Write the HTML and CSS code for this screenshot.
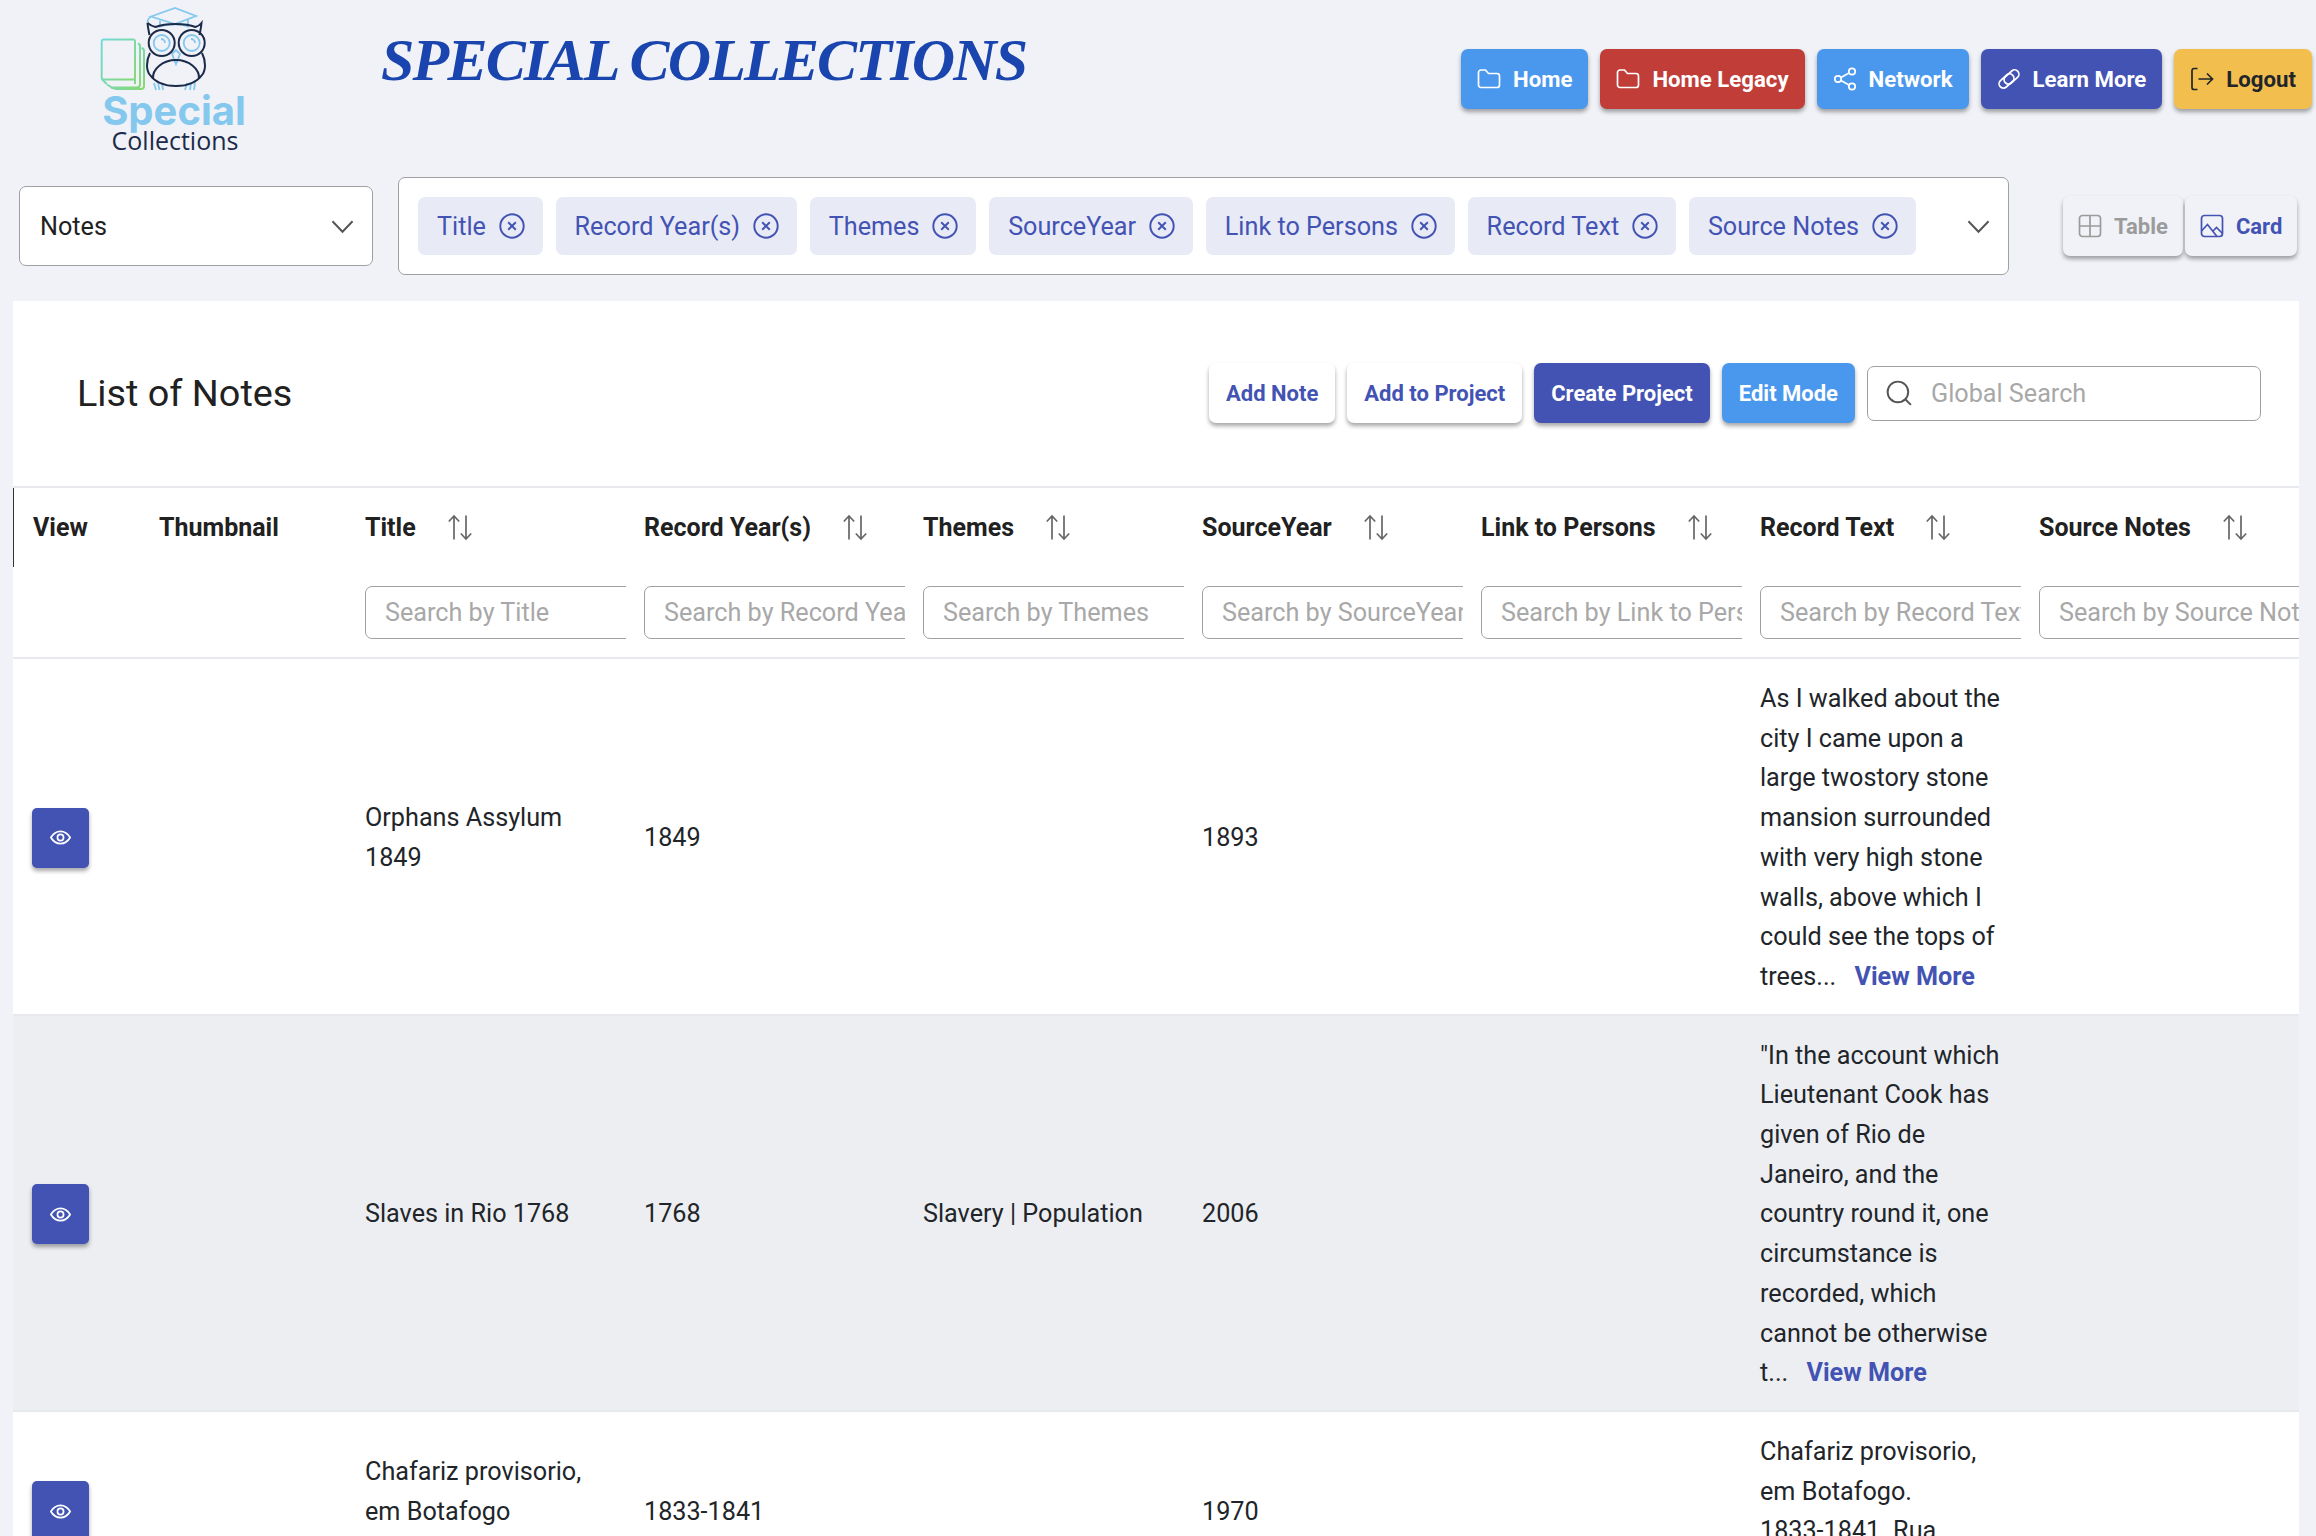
FILE: index.html
```html
<!DOCTYPE html>
<html lang="en">
<head>
   <meta charset="UTF-8">
   <meta name="viewport" content="width=device-width, initial-scale=1.0">
   <title>Special Collections</title>
   <link rel="stylesheet" href="styles.css">
</head>
<body>
   <svg class="icon-defs" width="0" height="0">
       <defs>
           <linearGradient id="bookGrad" x1="0" y1="0" x2="1" y2="1">
               <stop offset="0" stop-color="#74dadb"/>
               <stop offset="1" stop-color="#86d873"/>
           </linearGradient>
           <symbol id="i-folder" viewBox="0 0 24 24"><path d="M1.500 5.500a2.500 2.500 0 0 1 2.500-2.500h4.500l3 3.500h8.500a2.500 2.500 0 0 1 2.500 2.500v9a2.500 2.500 0 0 1-2.500 2.500H4a2.500 2.500 0 0 1-2.500-2.500z"/></symbol>
           <symbol id="i-share" viewBox="0 0 24 24"><circle cx="19" cy="4.500" r="3.200"/><circle cx="19" cy="19.500" r="3.200"/><circle cx="5" cy="12" r="3.200"/><path d="M8 10.400l8-4.300M8 13.600l8 4.300"/></symbol>
           <symbol id="i-link" viewBox="0 0 24 24"><rect x="1" y="9.700" width="17" height="8.600" rx="4.300" transform="rotate(-42 9.500 14)"/><rect x="6" y="5.700" width="17" height="8.600" rx="4.300" transform="rotate(-42 14.500 10)"/></symbol>
           <symbol id="i-logout" viewBox="0 0 24 24"><path d="M7.500 1.500H4a2 2 0 0 0-2 2v17a2 2 0 0 0 2 2h3.500"/><path d="M8.500 12h14M17 6.500l5.500 5.500-5.500 5.500"/></symbol>
           <symbol id="i-table" viewBox="0 0 24 24"><rect x="1.500" y="1.500" width="21" height="21" rx="3"/><path d="M1.500 12h21M12 1.500v21"/></symbol>
           <symbol id="i-image" viewBox="0 0 24 24"><rect x="1.500" y="1.500" width="21" height="21" rx="3"/><path d="M1.500 17l6-6.500 9.500 12M13 17l3.500-3.500 6 6"/></symbol>
           <symbol id="i-search" viewBox="0 0 24 24"><circle cx="11" cy="11" r="9.500"/><path d="M18 18l5 5"/></symbol>
           <symbol id="i-eye" viewBox="0 0 24 24"><path d="M1 12c3-5 6.500-7 11-7s8 2 11 7c-3 5-6.500 7-11 7s-8-2-11-7z"/><circle cx="12" cy="12" r="3.500"/></symbol>
           <symbol id="i-close" viewBox="0 0 24 24"><circle cx="12" cy="12" r="10.800"/><path d="M8.500 8.500l7 7M15.500 8.500l-7 7"/></symbol>
           <symbol id="i-down" viewBox="0 0 24 24"><path d="M1.500 6.500L12 17.500 22.500 6.500"/></symbol>
           <symbol id="i-sort" viewBox="0 0 26 26"><path d="M7 25V1.500M1.800 7L7 1.500 12.200 7M19 1v23.500M13.800 19l5.200 5.500 5.200-5.500"/></symbol>
       </defs>
   </svg>

   <div class="page">
       <header class="top-bar">
           <div class="logo">
               <svg class="logo-art" width="110" height="84" viewBox="0 0 110 84">
                   <g fill="none" stroke="url(#bookGrad)" stroke-width="2">
                       <path d="M38 36.500a3 3 0 0 1 2 3v38a3 3 0 0 1-3 3H12l-5-3"/>
                       <path d="M41.500 41a3 3 0 0 1 2.500 3v35a3 3 0 0 1-3 3H16l-5-1.500"/>
                       <rect x="1.700" y="32.500" width="33.300" height="40" rx="2"/>
                       <path d="M1.700 72l5 5M35 72v5"/>
                   </g>
                   <g fill="none" stroke="#84c8ee" stroke-width="1.800">
                       <path d="M51 9.500L75 1l21 8-21 8z"/>
                       <path d="M60 13.500v6c8-3 22-3 28 0v-7"/>
                       <path d="M51 10c-3 1-4 4-3 7"/>
                       <circle cx="61.700" cy="36" r="8"/>
                       <circle cx="91.700" cy="36" r="8"/>
                       <path d="M61 32a4 4 0 0 1 4 4M91 32a4 4 0 0 1 4 4"/>
                       <path d="M76 43l-4 4 4 10 4-10z"/>
                       <path d="M54 76l2 7M58 76l1.500 7M62 76l1 7M87 76l-2 7M91 76l-1 7M95 76l-1 7"/>
                   </g>
                   <g fill="none" stroke="#1c2b49" stroke-width="2">
                       <path d="M47.500 16c3 2.500 6 3.500 8 4 10-4 30-4 40 0 2-.5 4-1.500 6-4-.500 6-1.500 9-2 12"/>
                       <path d="M47.500 16c.500 6 1.500 9 2 12"/>
                       <circle cx="61.700" cy="36" r="13"/>
                       <circle cx="91.700" cy="36" r="13"/>
                       <path d="M50 46c-4 8-4 17 0 22 5 7 13 11 26 11s21-4 26-11c4-5 4-14 0-22"/>
                       <path d="M53 72c-1-10 10-19 23-19s24 9 23 19"/>
                   </g>
               </svg>
               <span class="logo-main">Special</span>
               <span class="logo-sub">Collections</span>
           </div>
           <h1 class="site-title">SPECIAL COLLECTIONS</h1>
           <nav class="main-nav">
               <a class="btn btn-blue"><svg class="ico"><use href="#i-folder"/></svg>Home</a>
               <a class="btn btn-red"><svg class="ico"><use href="#i-folder"/></svg>Home Legacy</a>
               <a class="btn btn-blue"><svg class="ico"><use href="#i-share"/></svg>Network</a>
               <a class="btn btn-indigo"><svg class="ico"><use href="#i-link"/></svg>Learn More</a>
               <a class="btn btn-yellow"><svg class="ico"><use href="#i-logout"/></svg>Logout</a>
           </nav>
       </header>

       <div class="filter-bar">
           <div class="select-box">
               <span>Notes</span>
               <svg class="ico-down"><use href="#i-down"/></svg>
           </div>
           <div class="multi-box">
               <div class="chips">
                   <span class="chip">Title<svg class="ico-close"><use href="#i-close"/></svg></span>
                   <span class="chip">Record Year(s)<svg class="ico-close"><use href="#i-close"/></svg></span>
                   <span class="chip">Themes<svg class="ico-close"><use href="#i-close"/></svg></span>
                   <span class="chip">SourceYear<svg class="ico-close"><use href="#i-close"/></svg></span>
                   <span class="chip">Link to Persons<svg class="ico-close"><use href="#i-close"/></svg></span>
                   <span class="chip">Record Text<svg class="ico-close"><use href="#i-close"/></svg></span>
                   <span class="chip">Source Notes<svg class="ico-close"><use href="#i-close"/></svg></span>
               </div>
               <svg class="ico-down"><use href="#i-down"/></svg>
           </div>
           <div class="view-toggle">
               <a class="toggle-btn toggle-table"><svg class="ico"><use href="#i-table"/></svg>Table</a>
               <a class="toggle-btn toggle-card"><svg class="ico"><use href="#i-image"/></svg>Card</a>
           </div>
       </div>

       <main class="card">
           <div class="card-head">
               <h2>List of Notes</h2>
               <div class="card-actions">
                   <a class="act act-white">Add Note</a>
                   <a class="act act-white">Add to Project</a>
                   <a class="act btn-indigo">Create Project</a>
                   <a class="act btn-blue">Edit Mode</a>
                   <div class="global-search">
                       <svg class="ico-search"><use href="#i-search"/></svg>
                       <input type="text" placeholder="Global Search">
                   </div>
               </div>
           </div>

           <table class="notes-table">
               <colgroup>
                   <col class="col-view"><col class="col-thumb">
                   <col class="col-data"><col class="col-data"><col class="col-data"><col class="col-data"><col class="col-data"><col class="col-data"><col class="col-data">
               </colgroup>
               <thead>
                   <tr class="head-row">
                       <th class="first-head">View</th>
                       <th>Thumbnail</th>
                       <th><div class="th-in">Title<svg class="ico-sort"><use href="#i-sort"/></svg></div></th>
                       <th><div class="th-in">Record Year(s)<svg class="ico-sort"><use href="#i-sort"/></svg></div></th>
                       <th><div class="th-in">Themes<svg class="ico-sort"><use href="#i-sort"/></svg></div></th>
                       <th><div class="th-in">SourceYear<svg class="ico-sort"><use href="#i-sort"/></svg></div></th>
                       <th><div class="th-in">Link to Persons<svg class="ico-sort"><use href="#i-sort"/></svg></div></th>
                       <th><div class="th-in">Record Text<svg class="ico-sort"><use href="#i-sort"/></svg></div></th>
                       <th><div class="th-in">Source Notes<svg class="ico-sort"><use href="#i-sort"/></svg></div></th>
                   </tr>
                   <tr class="search-row">
                       <th></th>
                       <th></th>
                       <th><div class="col-search"><input type="text" placeholder="Search by Title"></div></th>
                       <th><div class="col-search"><input type="text" placeholder="Search by Record Year(s)"></div></th>
                       <th><div class="col-search"><input type="text" placeholder="Search by Themes"></div></th>
                       <th><div class="col-search"><input type="text" placeholder="Search by SourceYear"></div></th>
                       <th><div class="col-search"><input type="text" placeholder="Search by Link to Persons"></div></th>
                       <th><div class="col-search"><input type="text" placeholder="Search by Record Text"></div></th>
                       <th><div class="col-search"><input type="text" placeholder="Search by Source Notes"></div></th>
                   </tr>
               </thead>
               <tbody>
                   <tr>
                       <td><a class="eye-btn"><svg class="ico-eye"><use href="#i-eye"/></svg></a></td>
                       <td></td>
                       <td>Orphans Assylum 1849</td>
                       <td>1849</td>
                       <td></td>
                       <td>1893</td>
                       <td></td>
                       <td>As I walked about the city I came upon a large twostory stone mansion surrounded with very high stone walls, above which I could see the tops of trees... <a class="view-more">View More</a></td>
                       <td></td>
                   </tr>
                   <tr class="row-alt">
                       <td><a class="eye-btn"><svg class="ico-eye"><use href="#i-eye"/></svg></a></td>
                       <td></td>
                       <td>Slaves in Rio 1768</td>
                       <td>1768</td>
                       <td>Slavery | Population</td>
                       <td>2006</td>
                       <td></td>
                       <td>"In the account which Lieutenant Cook has given of Rio de Janeiro, and the country round it, one circumstance is recorded, which cannot be otherwise t... <a class="view-more">View More</a></td>
                       <td></td>
                   </tr>
                   <tr>
                       <td><a class="eye-btn"><svg class="ico-eye"><use href="#i-eye"/></svg></a></td>
                       <td></td>
                       <td>Chafariz provisorio, em Botafogo <span class="no-break">1833-1841</span></td>
                       <td>1833-1841</td>
                       <td></td>
                       <td>1970</td>
                       <td></td>
                       <td>Chafariz provisorio, em Botafogo. <span class="no-break">1833-1841.</span> Rua<br>... <a class="view-more">View More</a></td>
                       <td></td>
                   </tr>
               </tbody>
           </table>
       </main>
   </div>
</body>
</html>
```

FILE: styles.css
```css
html, body {
    margin: 0;
    height: 100%;
    overflow: hidden;
}

body {
    font-family: Roboto, "Liberation Sans", sans-serif;
    background-color: #f0f2f7;
    color: #212529;
}

.icon-defs {
    display: block;
    height: 0;
}

.page {
    height: 1536px;
    overflow: hidden;
}

svg use {
    fill: none;
    stroke: currentColor;
}

/* top row */
.top-bar {
    display: flex;
    height: 177px;
}

.logo {
    width: 150px;
    margin-left: 100px;
    padding-top: 7px;
    display: flex;
    flex-direction: column;
    align-items: center;
    box-sizing: border-box;
}

.logo-art {
    display: block;
    align-self: flex-start;
}

.logo-main {
    font-family: Inter, sans-serif;
    font-weight: 700;
    font-size: 40px;
    line-height: 40px;
    margin-left: -2px;
    color: #84c8ee;
}

.logo-sub {
    font-family: "Open Sans", sans-serif;
    font-size: 25px;
    line-height: 18px;
    color: #1c2b49;
}

.site-title {
    margin: 30px 0 0 131px;
    font-family: "Liberation Serif", serif;
    font-style: italic;
    font-weight: 700;
    font-size: 60px;
    letter-spacing: -1.8px;
    line-height: 60px;
    color: #1a45ae;
    white-space: nowrap;
}

.main-nav {
    margin-left: auto;
    margin-top: 49px;
    padding-right: 4px;
    display: flex;
    gap: 12px;
    align-items: flex-start;
}

.btn {
    display: flex;
    align-items: center;
    gap: 12px;
    height: 60px;
    padding: 0 16px;
    border-radius: 7px;
    font-weight: 700;
    font-size: 22.2px;
    box-shadow: 0 3px 4px rgba(0, 0, 0, 0.35);
    white-space: nowrap;
}

.ico {
    width: 24px;
    height: 24px;
    stroke-width: 1.7;
    flex: none;
}

.btn-blue {
    background-color: #4a98ee;
    color: #fff;
}

.btn-red {
    background-color: #c03d38;
    color: #fff;
}

.btn-indigo {
    background-color: #4353b3;
    color: #fff;
}

.btn-yellow {
    background-color: #f2bf4f;
    color: #212529;
}

/* selects row */
.filter-bar {
    display: flex;
    align-items: center;
    height: 98px;
    padding-left: 19px;
}

.select-box {
    width: 354px;
    height: 80px;
    box-sizing: border-box;
    margin-right: 25px;
    padding: 0 18px 0 20px;
    display: flex;
    align-items: center;
    justify-content: space-between;
    background: #fff;
    border: 1.5px solid #a0a0a0;
    border-radius: 7px;
    font-size: 25.2px;
    color: #212121;
}

.ico-down {
    width: 23px;
    height: 23px;
    stroke-width: 2;
    color: #555;
    flex: none;
}

.multi-box {
    width: 1611px;
    height: 98px;
    box-sizing: border-box;
    padding: 0 18px 0 19px;
    display: flex;
    align-items: center;
    justify-content: space-between;
    background: #fff;
    border: 1.5px solid #a0a0a0;
    border-radius: 7px;
}

.chips {
    display: flex;
    gap: 12.700px;
}

.chip {
    display: flex;
    align-items: center;
    gap: 13px;
    height: 58px;
    padding: 0 18px 0 19px;
    background-color: #e8eaf6;
    border-radius: 7px;
    font-size: 25.2px;
    color: #4353b3;
    white-space: nowrap;
}

.ico-close {
    width: 26px;
    height: 26px;
    stroke-width: 1.8;
}

.view-toggle {
    display: flex;
    gap: 2px;
    margin-left: 54px;
}

.toggle-btn {
    display: flex;
    align-items: center;
    gap: 12px;
    height: 60px;
    padding: 0 15px;
    border-radius: 7px;
    background-color: #f0f2f7;
    font-weight: 700;
    font-size: 22px;
    box-shadow: 0 3px 4px rgba(0, 0, 0, 0.35);
}

.toggle-table {
    color: #9b9b9b;
}

.toggle-card {
    color: #4353b3;
}

/* main card */
.card {
    margin: 26px 17px 0 13px;
    background: #fff;
    overflow: hidden;
}

.card-head {
    height: 187px;
    padding: 0 38px 1px 64px;
    box-sizing: border-box;
    display: flex;
    align-items: center;
    justify-content: space-between;
    border-bottom: 2px solid #e8e9ec;
}

.card-head h2 {
    margin: 0;
    font-weight: 400;
    font-size: 37.800px;
    color: #212121;
}

.card-actions {
    display: flex;
    align-items: center;
    gap: 12px;
}

.act {
    display: flex;
    align-items: center;
    height: 60px;
    padding: 0 17px;
    border-radius: 7px;
    font-weight: 700;
    font-size: 22px;
    box-shadow: 0 3px 4px rgba(0, 0, 0, 0.35);
    white-space: nowrap;
}

.act-white {
    background: #fff;
    color: #4353b3;
}

.global-search {
    width: 394px;
    height: 55px;
    box-sizing: border-box;
    padding-left: 18px;
    display: flex;
    align-items: center;
    gap: 19px;
    border: 1.5px solid #a0a0a0;
    border-radius: 7px;
}

.ico-search {
    width: 26px;
    height: 26px;
    stroke-width: 1.8;
    color: #555;
    flex: none;
}

.global-search input {
    flex: 1;
    min-width: 0;
    border: none;
    outline: none;
    padding: 0;
    font-family: inherit;
    font-size: 25.2px;
}

input::placeholder {
    color: #a8a8a8;
    opacity: 1;
}

/* table */
.notes-table {
    width: 2287px;
    table-layout: fixed;
    border-collapse: separate;
    border-spacing: 0;
    font-size: 25.2px;
    line-height: 39.7px;
}

.col-view {
    width: 128px;
}

.col-thumb {
    width: 206px;
}

.col-data {
    width: 279px;
}

.notes-table th {
    padding: 0 0 0 18px;
    text-align: left;
    font-weight: 700;
    font-size: 25px;
    color: #212121;
    white-space: nowrap;
}

.head-row {
    height: 79px;
}

.notes-table .first-head {
    padding-left: 19px;
    border-left: 1.5px solid #333;
}

.th-in {
    display: flex;
    align-items: center;
    gap: 31px;
}

.ico-sort {
    width: 26px;
    height: 27px;
    stroke-width: 1.7;
    color: #666;
    flex: none;
}

.search-row {
    height: 92px;
}

.search-row th {
    border-bottom: 2px solid #e8e9ec;
}

.col-search {
    width: 261px;
    overflow: hidden;
}

.col-search input {
    display: block;
    width: 420px;
    height: 53px;
    box-sizing: border-box;
    padding: 0 0 0 19px;
    border: 1.5px solid #a0a0a0;
    border-radius: 7px;
    outline: none;
    font-family: inherit;
    font-size: 25.2px;
    background: #fff;
}

.notes-table td {
    padding: 20px 18px 17px;
    vertical-align: middle;
    border-bottom: 2px solid #e8e9ec;
    word-wrap: break-word;
}

.notes-table td:first-child {
    padding-left: 19px;
}

.row-alt {
    background-color: #eceef2;
}

.no-break {
    white-space: nowrap;
}

.eye-btn {
    display: flex;
    align-items: center;
    justify-content: center;
    width: 57px;
    height: 60px;
    background-color: #4353b3;
    color: #fff;
    border-radius: 5px;
    box-shadow: 0 3px 4px rgba(0, 0, 0, 0.35);
}

.ico-eye {
    width: 21px;
    height: 21px;
    stroke-width: 2;
}

.view-more {
    margin-left: 12px;
    font-weight: 700;
    color: #4353b3;
}
```
